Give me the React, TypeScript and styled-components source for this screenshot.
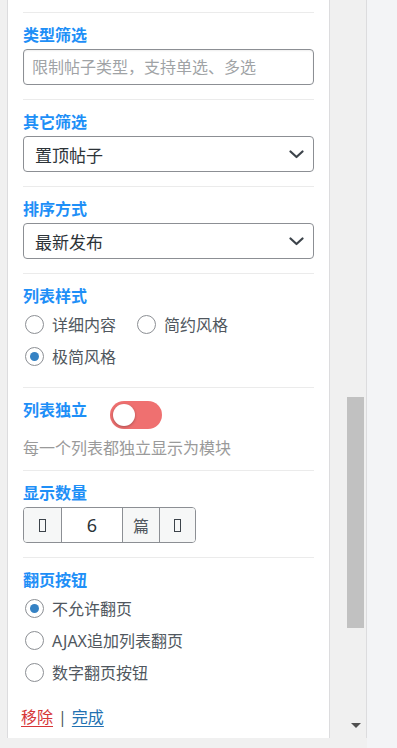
import * as React from 'react'
import styled, { createGlobalStyle } from 'styled-components'

const GlobalStyle = createGlobalStyle`
  html, body {
    margin: 0;
    padding: 0;
    overflow: hidden;
  }
  body {
    font-family: 'Noto Sans', 'Noto Sans CJK SC', sans-serif;
    background: #f3f4f6;
  }
  * {
    box-sizing: border-box;
  }
`

type RadioItem = { label: string; checked?: boolean }

const styleOptions: RadioItem[] = [
  { label: '详细内容' },
  { label: '简约风格' },
  { label: '极简风格', checked: true },
]

const pagerOptions: RadioItem[] = [
  { label: '不允许翻页', checked: true },
  { label: 'AJAX追加列表翻页' },
  { label: '数字翻页按钮' },
]

const Chevron = () => (
  <svg width="15" height="9" viewBox="0 0 15 9">
    <polyline
      points="1.5,1.5 7.5,7 13.5,1.5"
      fill="none"
      stroke="#3c434a"
      strokeWidth="2.2"
      strokeLinecap="round"
      strokeLinejoin="round"
    />
  </svg>
)

const RadioList = ({ items, inline }: { items: RadioItem[]; inline?: boolean }) => (
  <Radios inline={inline}>
    {items.map((item) => (
      <RadioRow key={item.label}>
        <RadioCircle checked={item.checked} />
        <span>{item.label}</span>
      </RadioRow>
    ))}
  </Radios>
)

// component
export default function App() {
  return (
    <Page>
      <GlobalStyle />
      <Frame>
        <FrameBody>
          <Gutter />
          <Panel>
            <Section>
              <Label>类型筛选</Label>
              <TextInput placeholder="限制帖子类型，支持单选、多选" />
            </Section>

            <Section>
              <Label>其它筛选</Label>
              <Select>
                <span>置顶帖子</span>
                <Chevron />
              </Select>
            </Section>

            <Section>
              <Label>排序方式</Label>
              <Select>
                <span>最新发布</span>
                <Chevron />
              </Select>
            </Section>

            <Section bottom={15}>
              <Label>列表样式</Label>
              <RadioList items={styleOptions} inline />
            </Section>

            <Section bottom={10}>
              <HeadRow>
                <Label>列表独立</Label>
                <Toggle>
                  <Knob />
                </Toggle>
              </HeadRow>
              <Hint>每一个列表都独立显示为模块</Hint>
            </Section>

            <Section>
              <Label>显示数量</Label>
              <NumberGroup>
                <Cell width={37} muted>
                  <Tofu />
                </Cell>
                <Cell width={61}>
                  <Digit>6</Digit>
                </Cell>
                <Cell width={37} muted>
                  篇
                </Cell>
                <Cell width={36} muted>
                  <Tofu />
                </Cell>
              </NumberGroup>
            </Section>

            <Section bottom={0}>
              <Label>翻页按钮</Label>
              <RadioList items={pagerOptions} />
              <Footer>
                <LinkText danger>移除</LinkText>
                <Pipe>|</Pipe>
                <LinkText>完成</LinkText>
              </Footer>
            </Section>
          </Panel>
          <Track>
            <Thumb />
            <TrackFill />
            <ArrowDown width="10" height="5" viewBox="0 0 10 5">
              <polygon points="0,0 10,0 5,5" fill="#505050" />
            </ArrowDown>
          </Track>
        </FrameBody>
        <BottomStrip />
      </Frame>
      <RightSide />
    </Page>
  )
}

// styles
const Page = styled.div`
  display: flex;
  width: 397px;
  height: 748px;
`

const Frame = styled.div`
  display: flex;
  flex-direction: column;
  width: 367px;
`

const FrameBody = styled.div`
  display: flex;
  height: 738px;
  overflow: hidden;
`

const Gutter = styled.div`
  width: 7px;
  background: #f0f0f0;
`

const Panel = styled.div`
  width: 323px;
  background: #fff;
  border-left: 1px solid #dcdcde;
  border-right: 1px solid #dcdcde;
  padding: 12px 15px 0 15px;
`

const Section = styled.div<{ bottom?: number }>`
  border-top: 1px solid #ebebeb;
  padding: 10px 0 ${(p) => (p.bottom ?? 14)}px;
`

const Label = styled.div`
  font-size: 16px;
  font-weight: 700;
  line-height: 24px;
  color: #1e8ff7;
`

const TextInput = styled.input`
  display: block;
  width: 100%;
  height: 36px;
  margin-top: 2px;
  border: 1px solid #8c8f94;
  border-radius: 4px;
  padding: 0 8px;
  font-family: inherit;
  font-size: 16px;
  color: #2c3338;
  background: #fff;
  outline: none;
  box-shadow: inset 0 1px 2px rgba(0, 0, 0, 0.07);

  &::placeholder {
    color: #a0a3a6;
  }
`

const Select = styled.div`
  display: flex;
  align-items: center;
  justify-content: space-between;
  height: 36px;
  margin-top: 2px;
  border: 1px solid #8c8f94;
  border-radius: 4px;
  padding: 0 9px 0 11px;
  font-size: 17px;
  color: #2c3338;
  background: #fff;
`

const Radios = styled.div<{ inline?: boolean }>`
  display: flex;
  flex-direction: ${(p) => (p.inline ? 'row' : 'column')};
  flex-wrap: wrap;
  column-gap: 19px;
`

const RadioRow = styled.label`
  display: flex;
  align-items: center;
  gap: 8px;
  height: 32px;
  margin-left: 2px;
  font-size: 16px;
  color: #50575e;
`

const RadioCircle = styled.span<{ checked?: boolean }>`
  display: flex;
  align-items: center;
  justify-content: center;
  width: 19px;
  height: 19px;
  border: 1px solid #8c8f94;
  border-radius: 50%;
  background: #fff;

  &::after {
    content: '';
    display: ${(p) => (p.checked ? 'block' : 'none')};
    width: 9px;
    height: 9px;
    border-radius: 50%;
    background: #3582c4;
  }
`

const HeadRow = styled.div`
  display: flex;
  align-items: flex-start;
`

const Toggle = styled.div`
  display: flex;
  align-items: center;
  width: 52px;
  height: 28px;
  margin: 3px 0 0 23px;
  padding: 0 3px;
  border-radius: 14px;
  background: #ef7070;
`

const Knob = styled.span`
  width: 22px;
  height: 22px;
  border-radius: 50%;
  background: #fff;
  box-shadow: 0 1px 3px rgba(0, 0, 0, 0.3);
`

const Hint = styled.div`
  margin-top: 7px;
  font-size: 16px;
  line-height: 24px;
  color: #9a9a9a;
`

const NumberGroup = styled.div`
  display: inline-flex;
  height: 36px;
  margin-top: 2px;
  border: 1px solid #8c8f94;
  border-radius: 4px;
  overflow: hidden;
`

const Cell = styled.div<{ width: number; muted?: boolean }>`
  display: flex;
  align-items: center;
  justify-content: center;
  width: ${(p) => p.width}px;
  font-size: 16px;
  color: #50575e;
  background: ${(p) => (p.muted ? '#f6f7f7' : '#fff')};

  & + & {
    border-left: 1px solid #8c8f94;
  }
`

const Digit = styled.span`
  font-size: 18px;
  color: #2c3338;
`

const Tofu = styled.span`
  display: block;
  width: 7px;
  height: 13px;
  border: 1.5px solid #3c434a;
`

const Footer = styled.div`
  display: flex;
  align-items: center;
  gap: 5px;
  margin: 17px 0 0 -2px;
  font-size: 16px;
  line-height: 24px;
`

const LinkText = styled.a<{ danger?: boolean }>`
  color: ${(p) => (p.danger ? '#d63638' : '#2271b1')};
  text-decoration: underline;
  text-underline-offset: 3px;
`

const Pipe = styled.span`
  color: #50575e;
`

const Track = styled.div`
  display: flex;
  flex-direction: column;
  width: 37px;
  padding-top: 397px;
  background: #f0f0f0;
  border-right: 1px solid #dcdcde;
`

const Thumb = styled.div`
  width: 17px;
  height: 231px;
  margin-left: 17px;
  background: #c1c1c1;
`

const TrackFill = styled.div`
  flex: 1;
`

const ArrowDown = styled.svg`
  display: block;
  margin: 0 0 10px 21px;
`

const BottomStrip = styled.div`
  height: 10px;
  background: #f0f0f0;
`

const RightSide = styled.div`
  flex: 1;
  background: #f3f4f6;
`
